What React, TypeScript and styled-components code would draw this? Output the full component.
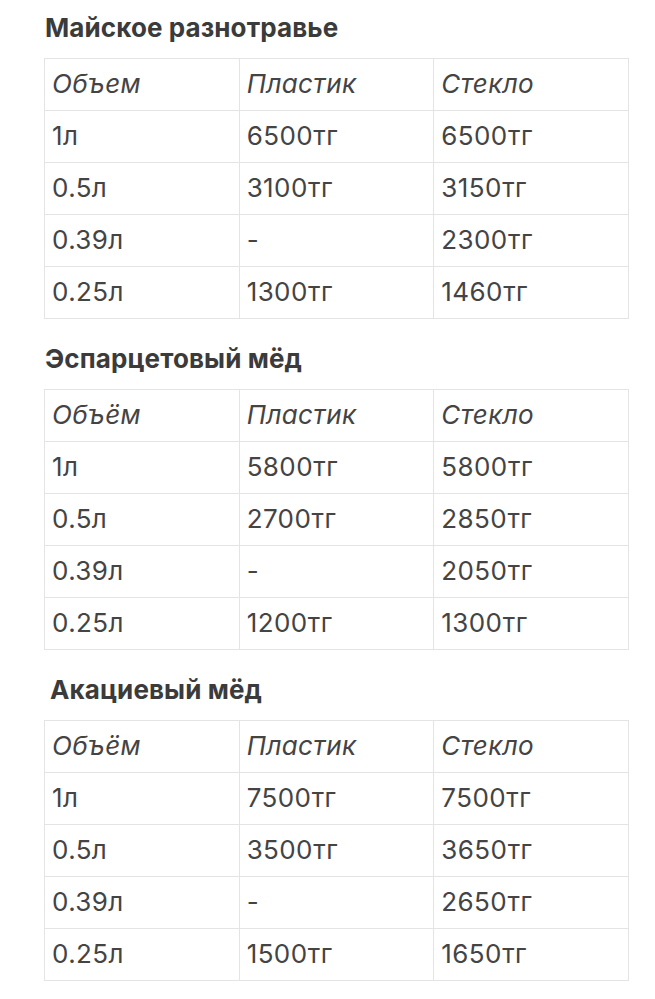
import styled, { createGlobalStyle } from "styled-components";

const GlobalStyle = createGlobalStyle`
  html, body {
    margin: 0;
    padding: 0;
    background: #ffffff;
  }
  body {
    font-family: Inter, "Noto Sans", "Liberation Sans", sans-serif;
    color: #3a3a3a;
  }
`;

const Page = styled.div`
  width: 585px;
  padding: 12px 0 0 44px;
  display: flex;
  flex-direction: column;
  gap: 24px;
`;

const Section = styled.section`
  display: flex;
  flex-direction: column;
`;

const Heading = styled.h2<{ indent?: number }>`
  margin: 0 0 14px ${(p) => p.indent ?? 1}px;
  font-size: 26px;
  line-height: 32px;
  font-weight: 700;
  color: #3b3b3b;
  letter-spacing: 0.1px;
`;

const Table = styled.table`
  width: 100%;
  border-collapse: collapse;
  table-layout: fixed;
`;

const Cell = styled.td<{ head?: boolean }>`
  height: 49px;
  padding: 0 7px 2px;
  border: 1px solid #e4e4e4;
  font-size: 26px;
  line-height: 30px;
  letter-spacing: 0.4px;
  font-style: ${(p) => (p.head ? "italic" : "normal")};
  font-weight: 400;
  color: #444444;
  vertical-align: middle;
`;

interface PriceRow {
  volume: string;
  plastic: string;
  glass: string;
}

interface Honey {
  name: string;
  volumeLabel: string;
  indent?: number;
  rows: PriceRow[];
}

const honeys: Honey[] = [
  {
    name: "Майское разнотравье",
    volumeLabel: "Объем",
    rows: [
      { volume: "1л", plastic: "6500тг", glass: "6500тг" },
      { volume: "0.5л", plastic: "3100тг", glass: "3150тг" },
      { volume: "0.39л", plastic: "-", glass: "2300тг" },
      { volume: "0.25л", plastic: "1300тг", glass: "1460тг" },
    ],
  },
  {
    name: "Эспарцетовый мёд",
    volumeLabel: "Объём",
    rows: [
      { volume: "1л", plastic: "5800тг", glass: "5800тг" },
      { volume: "0.5л", plastic: "2700тг", glass: "2850тг" },
      { volume: "0.39л", plastic: "-", glass: "2050тг" },
      { volume: "0.25л", plastic: "1200тг", glass: "1300тг" },
    ],
  },
  {
    name: "Акациевый мёд",
    volumeLabel: "Объём",
    indent: 6,
    rows: [
      { volume: "1л", plastic: "7500тг", glass: "7500тг" },
      { volume: "0.5л", plastic: "3500тг", glass: "3650тг" },
      { volume: "0.39л", plastic: "-", glass: "2650тг" },
      { volume: "0.25л", plastic: "1500тг", glass: "1650тг" },
    ],
  },
];

function PriceTable({ honey }: { honey: Honey }) {
  return (
    <Section>
      <Heading indent={honey.indent}>{honey.name}</Heading>
      <Table>
        <tbody>
          <tr>
            <Cell head>{honey.volumeLabel}</Cell>
            <Cell head>Пластик</Cell>
            <Cell head>Стекло</Cell>
          </tr>
          {honey.rows.map((r) => (
            <tr key={r.volume}>
              <Cell>{r.volume}</Cell>
              <Cell>{r.plastic}</Cell>
              <Cell>{r.glass}</Cell>
            </tr>
          ))}
        </tbody>
      </Table>
    </Section>
  );
}

export default function App() {
  return (
    <>
      <GlobalStyle />
      <Page>
        {honeys.map((h) => (
          <PriceTable key={h.name} honey={h} />
        ))}
      </Page>
    </>
  );
}
